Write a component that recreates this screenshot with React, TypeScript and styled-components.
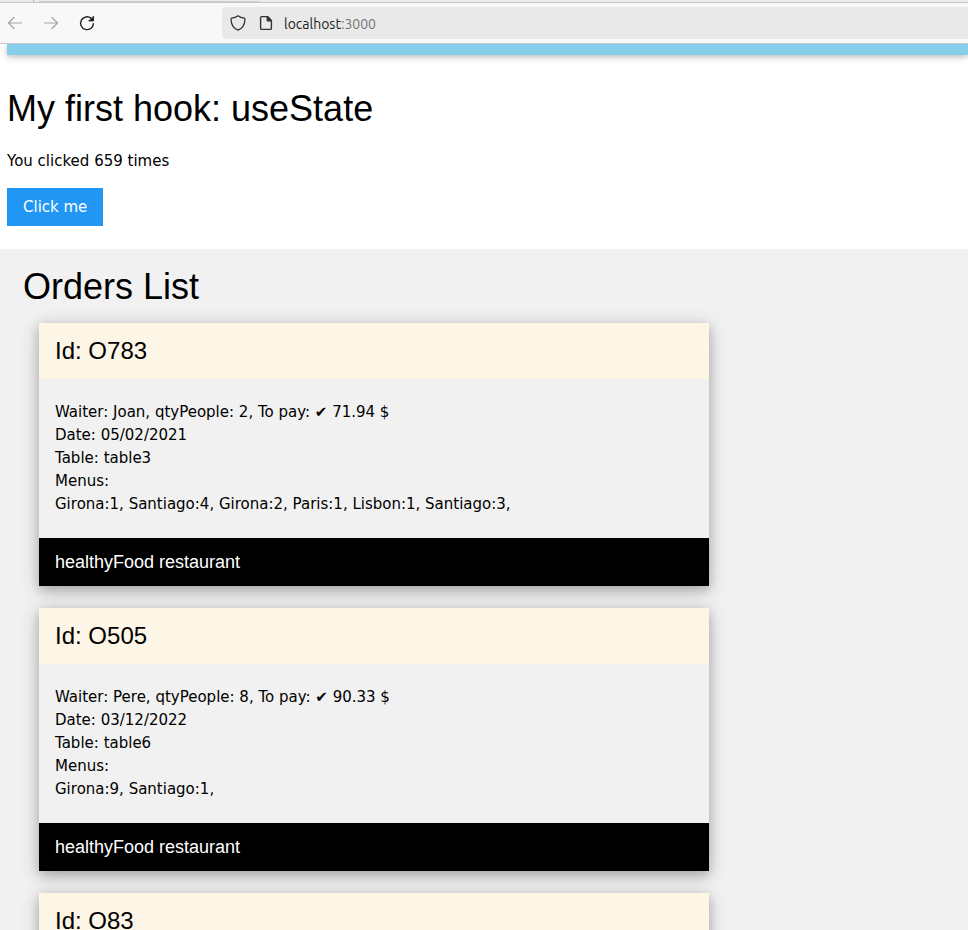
import React, { useState } from 'react';
import styled, { createGlobalStyle } from 'styled-components';

const GlobalStyle = createGlobalStyle`
  *, *::before, *::after { box-sizing: border-box; }
  html, body, #root { height: 100%; }
  body {
    margin: 0;
    overflow: hidden;
    background: #fff;
    color: #000;
    font-family: 'DejaVu Sans', Verdana, sans-serif;
    font-size: 15px;
    line-height: 23px;
  }
`;

const Browser = styled.div`
  display: flex;
  flex-direction: column;
  height: 100%;
`;

const TabStrip = styled.div`
  display: flex;
  flex: none;
  height: 3px;
  background: #ebebeb;
  border-bottom: 1px solid #c6c6c6;
`;

const TabStart = styled.div`
  width: 34px;
  border-right: 1px solid #b4b4b4;
`;

const ActiveTab = styled.div`
  width: 220px;
  margin-left: 5px;
  border-bottom: 1px solid #cfcfcf;
`;

const Toolbar = styled.nav`
  display: flex;
  flex: none;
  align-items: center;
  height: 41px;
  background: #f8f8f8;
  border-bottom: 1px solid #c8c8c8;
`;

const NavButtons = styled.div`
  display: flex;
  flex: none;
  gap: 20px;
  width: 222px;
  padding-left: 7px;
`;

const NavButton = styled.button`
  display: flex;
  width: 16px;
  height: 16px;
  padding: 0;
  border: 0;
  background: none;
  color: #222;

  &:disabled { color: #a3a3a3; }
`;

const AddressBar = styled.div`
  display: flex;
  flex: 1;
  align-items: center;
  gap: 12px;
  height: 32px;
  padding-left: 8px;
  background: #e9e9e9;
  border-radius: 4px 0 0 4px;
  color: #333;
`;

const SiteIcons = styled.span`
  display: flex;
  gap: 12px;
  margin-right: -2px;
`;

const Address = styled.div`
  padding-top: 2px;
  font-family: Ubuntu, 'Noto Sans', sans-serif;
  font-size: 14px;
  line-height: 20px;
  color: #1c1c1c;
`;

const Port = styled.span`
  color: #777;
`;

const Viewport = styled.main`
  flex: 1;
  min-height: 0;
  overflow: hidden;
`;

const Banner = styled.div`
  height: 11px;
  margin-left: 7px;
  background: #87ceeb;
  box-shadow: 0 2px 5px 0 rgba(0, 0, 0, 0.16), 0 2px 10px 0 rgba(0, 0, 0, 0.12);
`;

const Counter = styled.section`
  padding: 27px 7px 23px;
`;

const Title = styled.h1`
  margin: 0;
  font-family: 'Liberation Sans', Arial, sans-serif;
  font-size: 36px;
  font-weight: 400;
  line-height: 54px;
`;

const Count = styled.p`
  margin: 14px 0 15px;
`;

const ClickButton = styled.button`
  display: block;
  padding: 8px 16px;
  border: 0;
  background: #2196f3;
  color: #fff;
  font: inherit;
  line-height: 22px;
  cursor: pointer;
`;

const Orders = styled.section`
  padding: 11px 0 10px 23px;
  background: #f1f1f1;
`;

const OrderList = styled.div`
  display: flex;
  flex-direction: column;
  gap: 22px;
  width: calc(70vw - 8px);
  margin: 9px 0 0 16px;
`;

const Card = styled.article`
  background: #f1f1f1;
  box-shadow: 0 4px 10px 0 rgba(0, 0, 0, 0.2), 0 4px 20px 0 rgba(0, 0, 0, 0.19);
`;

const CardHeader = styled.header`
  padding: 10px 16px;
  background: #fdf5e6;
`;

const CardTitle = styled.h3`
  margin: 0;
  font-family: 'Liberation Sans', Arial, sans-serif;
  font-size: 24px;
  font-weight: 400;
  line-height: 36px;
`;

const CardBody = styled.div`
  padding: 22px 16px;
`;

const CardFooter = styled.footer`
  padding: 10px 16px;
  background: #000;
  color: #fff;
  font-family: 'Liberation Sans', Arial, sans-serif;
  font-size: 18px;
  line-height: 28px;
`;

interface Order {
  id: string;
  waiter: string;
  people: number;
  total: string;
  date: string;
  table: string;
  menus: string;
}

const orders: Order[] = [
  {
    id: 'O783', waiter: 'Joan', people: 2, total: '71.94', date: '05/02/2021', table: 'table3',
    menus: 'Girona:1, Santiago:4, Girona:2, Paris:1, Lisbon:1, Santiago:3,',
  },
  {
    id: 'O505', waiter: 'Pere', people: 8, total: '90.33', date: '03/12/2022', table: 'table6',
    menus: 'Girona:9, Santiago:1,',
  },
];

const line = { fill: 'none', stroke: 'currentColor', strokeLinecap: 'round', strokeLinejoin: 'round' } as const;

const BackIcon = () => (
  <svg width="16" height="16" viewBox="0 0 16 16" {...line} strokeWidth="1.2">
    <path d="M14.5 8H1.5M7 2.5L1.5 8L7 13.5" />
  </svg>
);

const ForwardIcon = () => (
  <svg width="16" height="16" viewBox="0 0 16 16" {...line} strokeWidth="1.2">
    <path d="M1.5 8H14.5M9 2.5L14.5 8L9 13.5" />
  </svg>
);

const ReloadIcon = () => (
  <svg width="16" height="16" viewBox="0 0 16 16" {...line} strokeWidth="1.4">
    <path d="M12.2 3.4A6.4 6.4 0 1 0 14.4 8.6" />
    <path d="M14.6 1.4V6H10Z" fill="currentColor" strokeWidth="0.8" />
  </svg>
);

const ShieldIcon = () => (
  <svg width="16" height="16" viewBox="0 0 16 16" {...line} strokeWidth="1.3">
    <path d="M8 .8C6.3 2.2 4 3 1.7 3.2C1 3.3 1 4 1.1 5.2C1.4 9.8 4 13.6 8 15.2C12 13.6 14.6 9.8 14.9 5.2C15 4 15 3.3 14.3 3.2C12 3 9.7 2.2 8 .8Z" />
  </svg>
);

const PageIcon = () => (
  <svg width="16" height="16" viewBox="0 0 16 16" {...line} strokeWidth="1.4">
    <path d="M9.5 1.6H3.8Q2.6 1.6 2.6 2.8V13.2Q2.6 14.4 3.8 14.4H12.2Q13.4 14.4 13.4 13.2V5.6Z" />
    <path d="M9.3 1.6V5.8H13.4Z" fill="currentColor" />
  </svg>
);

const OrderCard = ({ order }: { order: Order }) => (
  <Card>
    <CardHeader><CardTitle>Id: {order.id}</CardTitle></CardHeader>
    <CardBody>
      <div>{`Waiter: ${order.waiter}, qtyPeople: ${order.people}, To pay: ✔ ${order.total} $`}</div>
      <div>Date: {order.date}</div>
      <div>Table: {order.table}</div>
      <div>Menus:</div>
      <div>{order.menus}</div>
    </CardBody>
    <CardFooter>healthyFood restaurant</CardFooter>
  </Card>
);

export default function App() {
  const [count, setCount] = useState(659);

  return (
    <Browser>
      <GlobalStyle />
      <TabStrip><TabStart /><ActiveTab /></TabStrip>
      <Toolbar aria-label="Browser">
        <NavButtons>
          <NavButton aria-label="Back" disabled><BackIcon /></NavButton>
          <NavButton aria-label="Forward" disabled><ForwardIcon /></NavButton>
          <NavButton aria-label="Reload"><ReloadIcon /></NavButton>
        </NavButtons>
        <AddressBar>
          <SiteIcons><ShieldIcon /><PageIcon /></SiteIcons>
          <Address>localhost<Port>:3000</Port></Address>
        </AddressBar>
      </Toolbar>
      <Viewport>
        <Banner />
        <Counter>
          <Title>My first hook: useState</Title>
          <Count>You clicked {count} times</Count>
          <ClickButton onClick={() => setCount(count + 1)}>Click me</ClickButton>
        </Counter>
        <Orders>
          <Title as="h2">Orders List</Title>
          <OrderList>
            {orders.map((order) => <OrderCard key={order.id} order={order} />)}
            <Card>
              <CardHeader><CardTitle>Id: O83</CardTitle></CardHeader>
            </Card>
          </OrderList>
        </Orders>
      </Viewport>
    </Browser>
  );
}
